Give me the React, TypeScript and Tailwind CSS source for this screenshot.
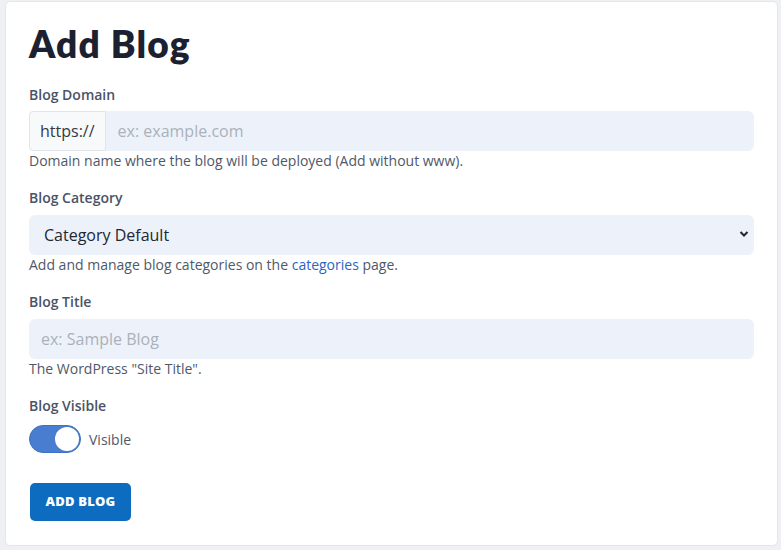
import React from "react";

export default function App() {
  const body = { fontFamily: '"Open Sans", "Noto Sans", sans-serif' };
  return (
    <div className="min-h-[550px] w-[781px] bg-[#eef0f4] pl-[5px] pt-[1px]" style={body}>
      <div className="w-[773px] h-[545px] bg-white rounded-[5px] border border-[#e2e6ee] px-[23px] pt-[20px]">
        <h1
          className="text-[37px] leading-[44px] font-extrabold text-[#1b2130] tracking-[1.2px]"
          style={{ fontFamily: 'Lato, "Open Sans", sans-serif' }}
        >
          Add Blog
        </h1>

        <div className="mt-[19px]">
          <label className="block text-[14px] leading-[20px] font-semibold text-[#4a5366] mb-[6px]">Blog Domain</label>
          <div className="flex h-[40px]">
            <div className="flex items-center px-[10px] bg-[#f8f9fa] border border-[#e1e4e8] rounded-l-[4px] text-[16px] text-[#333a44]">
              https://
            </div>
            <input
              className="flex-1 bg-[#edf1fa] rounded-r-[6px] px-[12px] text-[16px] text-[#333] placeholder:text-[#aab1bb] outline-none"
              placeholder="ex: example.com"
            />
          </div>
          <p className="text-[14px] leading-[20px] text-[#4f5868]">Domain name where the blog will be deployed (Add without www).</p>
        </div>

        <div className="mt-[17px]">
          <label className="block text-[14px] leading-[20px] font-semibold text-[#4a5366] mb-[7px]">Blog Category</label>
          <div className="relative h-[40px]">
            <select className="w-full h-full appearance-none bg-[#edf1fa] rounded-[6px] pl-[15px] text-[16px] text-[#222730] outline-none">
              <option>Category Default</option>
            </select>
            <svg className="absolute right-[5px] top-[14px] pointer-events-none" width="10" height="10" viewBox="0 0 10 10">
              <path d="M1.5 3 L5 6.5 L8.5 3" fill="none" stroke="#222730" strokeWidth="2" />
            </svg>
          </div>
          <p className="text-[14px] leading-[20px] text-[#4f5868]">
            Add and manage blog categories on the <a className="text-[#2a64c5]">categories</a> page.
          </p>
        </div>

        <div className="mt-[17px]">
          <label className="block text-[14px] leading-[20px] font-semibold text-[#4a5366] mb-[7px]">Blog Title</label>
          <input
            className="w-full h-[40px] bg-[#edf1fa] rounded-[6px] px-[12px] text-[16px] placeholder:text-[#aab1bb] outline-none"
            placeholder="ex: Sample Blog"
          />
          <p className="text-[14px] leading-[20px] text-[#4f5868]">The WordPress "Site Title".</p>
        </div>

        <div className="mt-[17px]">
          <label className="block text-[14px] leading-[20px] font-semibold text-[#4a5366] mb-[9px]">Blog Visible</label>
          <div className="flex items-center gap-[8px]">
            <div className="w-[52px] h-[28px] rounded-full bg-[#487dd0] border border-[#3f72c4] flex items-center justify-end pr-[1px]">
              <div className="w-[24px] h-[24px] rounded-full bg-white" />
            </div>
            <span className="text-[14px] text-[#4f5868]">Visible</span>
          </div>
        </div>

        <button
          className="mt-[30px] ml-[1px] w-[101px] h-[38px] bg-[#0d6cbf] rounded-[5px] text-white text-[13px] font-extrabold tracking-[0.2px]"
        >
          ADD BLOG
        </button>
      </div>
    </div>
  );
}
